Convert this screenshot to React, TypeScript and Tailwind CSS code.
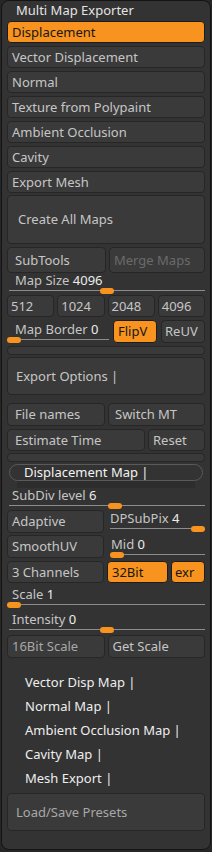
import React from 'react';

const Btn: React.FC<{ label?: string; on?: boolean; tone?: string; className?: string }> = ({
  label,
  on,
  tone = 'text-[#c6c6c6]',
  className = '',
}) => (
  <div
    className={`flex items-center rounded-[4px] border px-[4px] text-[13px] leading-none ${
      on ? 'border-[#1c1c1c] bg-[#f7931e] text-[#161616]' : `border-[#262626] bg-[#3a3a3a] ${tone}`
    } ${className}`}
  >
    {label}
  </div>
);

const Slider: React.FC<{ label: string; value: string; pos: number; className?: string; labelPad?: string }> = ({
  label,
  value,
  pos,
  className = '',
  labelPad = 'pl-[8px]',
}) => (
  <div className={`flex flex-col ${className}`}>
    <div className={`text-[13px] leading-[15px] text-[#c6c6c6] ${labelPad}`}>
      {label} <span className="text-[#ececec]">{value}</span>
    </div>
    <div className="relative h-[6px]">
      <div className="absolute left-[2px] right-0 top-[2px] h-px bg-[#8c8c8c]" />
      <div
        className="absolute top-0 h-[6px] w-[14px] rounded-[3px] bg-[#f7931e]"
        style={{ left: `${pos}%` }}
      />
    </div>
  </div>
);

const SectionTitle: React.FC<{ label: string }> = ({ label }) => (
  <div className="flex h-[24px] items-center pl-[18px] text-[13px] text-[#eeeeee]">{label} |</div>
);

export default function App() {
  const maps = [
    'Vector Displacement',
    'Normal',
    'Texture from Polypaint',
    'Ambient Occlusion',
    'Cavity',
    'Export Mesh',
  ];
  return (
    <div className="h-[852px] w-[212px] bg-[#262626] px-px font-['Noto_Sans',sans-serif]">
      <div className="flex h-[850px] flex-col rounded-[8px] border border-[#141414] bg-[#333333] px-[5px]">
        <div className="flex h-[20px] items-center pl-[9px] text-[13px] text-[#e4e4e4]">Multi Map Exporter</div>

        <div className="flex flex-col gap-[3px]">
          <Btn label="Displacement" on className="h-[22px]" />
          {maps.map((m) => (
            <Btn key={m} label={m} className="h-[22px]" />
          ))}
        </div>

        <Btn label="Create All Maps" className="mt-[2px] h-[49px] pl-[10px]" />

        <div className="mt-[3px] flex h-[26px] gap-[3px]">
          <Btn label="SubTools" className="flex-1 pl-[7px]" />
          <Btn label="Merge Maps" tone="text-[#6a6a6a]" className="flex-1 pl-[4px]" />
        </div>

        <Slider label="Map Size" value="4096" pos={47} className="h-[22px]" labelPad="pl-[8px]" />

        <div className="grid h-[22px] grid-cols-4 gap-[3px]">
          {['512', '1024', '2048', '4096'].map((s) => (
            <Btn key={s} label={s} className="pl-[3px]" />
          ))}
        </div>

        <div className="mt-[3px] flex h-[23px] gap-[4px]">
          <Slider label="Map Border" value="0" pos={0} className="w-[102px] pt-[2px]" labelPad="pl-[8px]" />
          <Btn label="FlipV" on className="w-[44px] pl-[4px]" />
          <Btn label="ReUV" className="flex-1 pl-[3px]" />
        </div>

        <div className="mt-[3px] h-[9px] rounded-[4px] border border-[#262626] bg-[#3a3a3a]" />

        <Btn label="Export Options |" className="mt-[2px] h-[38px] pl-[8px]" />

        <div className="mt-[8px] flex h-[23px] gap-[3px]">
          <Btn label="File names" className="flex-1 pl-[7px]" />
          <Btn label="Switch MT" className="flex-1 pl-[6px]" />
        </div>

        <div className="mt-[3px] flex h-[22px] gap-[3px]">
          <Btn label="Estimate Time" className="w-[138px] pl-[7px]" />
          <Btn label="Reset" className="flex-1 pl-[4px]" />
        </div>

        <div className="mt-[2px] h-[9px] rounded-[4px] border border-[#262626] bg-[#3a3a3a]" />

        <div className="mx-[2px] mt-[2px] flex h-[17px] items-center rounded-full border border-[#5a5a5a] bg-[#333333] pl-[14px] text-[13px] text-[#f2f2f2]">
          Displacement Map |
        </div>
        <div className="mx-[10px] h-[7px] bg-[#2d2d2d]" />

        <Slider label="SubDiv level" value="6" pos={51} className="h-[22px]" labelPad="pl-[5px]" />

        <div className="flex h-[23px] gap-[4px]">
          <Btn label="Adaptive" className="w-[97px] pl-[4px]" />
          <Slider label="DPSubPix" value="4" pos={86} className="flex-1 pt-px" labelPad="pl-[2px]" />
        </div>

        <div className="mt-[2px] flex h-[23px] gap-[4px]">
          <Btn label="SmoothUV" className="w-[97px] pl-[4px]" />
          <Slider label="Mid" value="0" pos={2} className="flex-1 pt-[2px]" labelPad="pl-[3px]" />
        </div>

        <div className="mt-[3px] flex h-[22px] gap-[3px]">
          <Btn label="3 Channels" className="w-[97px] pl-[4px]" />
          <Btn label="32Bit" on className="w-[61px] pl-[4px]" />
          <Btn label="exr" on className="flex-1 pl-[3px]" />
        </div>

        <Slider label="Scale" value="1" pos={0} className="h-[26px] pt-[4px]" labelPad="pl-[5px]" />
        <Slider label="Intensity" value="0" pos={47} className="h-[26px] pt-[3px]" labelPad="pl-[5px]" />

        <div className="flex h-[23px] gap-[3px]">
          <Btn label="16Bit Scale" tone="text-[#a8a8a8]" className="flex-1 pl-[4px]" />
          <Btn label="Get Scale" className="flex-1 pl-[4px]" />
        </div>

        <div className="mt-[13px] flex flex-col">
          {['Vector Disp Map', 'Normal Map', 'Ambient Occlusion Map', 'Cavity Map', 'Mesh Export'].map((s) => (
            <SectionTitle key={s} label={s} />
          ))}
        </div>

        <Btn label="Load/Save Presets" tone="text-[#a8a8a8]" className="mt-[2px] h-[38px] pl-[8px]" />
      </div>
    </div>
  );
}
